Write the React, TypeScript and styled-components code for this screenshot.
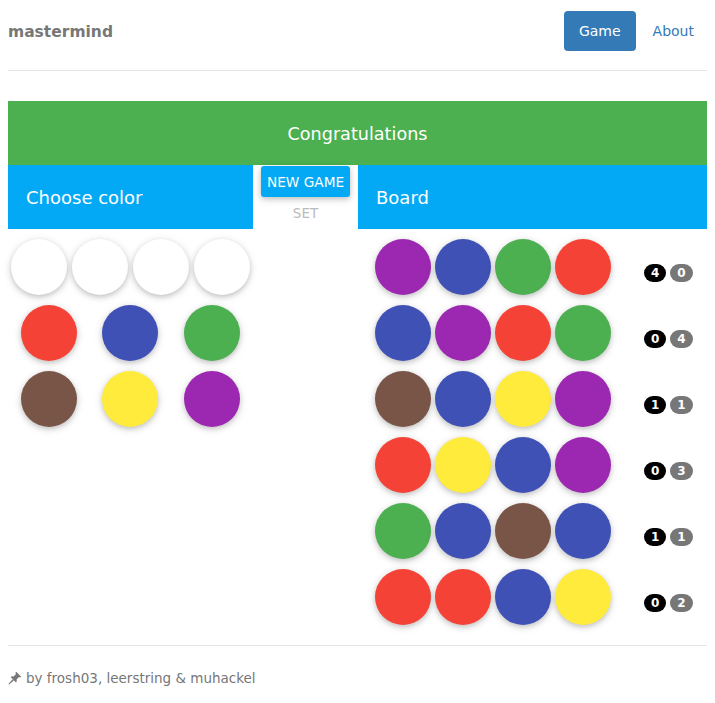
import React from 'react';
import styled, { createGlobalStyle } from 'styled-components';

type Peg = 'red' | 'blue' | 'green' | 'brown' | 'yellow' | 'purple' | 'white';

const pegColors: Record<Peg, string> = {
    red: '#f44336',
    blue: '#3f51b5',
    green: '#4caf50',
    brown: '#795548',
    yellow: '#ffeb3b',
    purple: '#9c27b0',
    white: '#ffffff',
};

type Row = {
    pegs: Peg[];
    black: number;
    white: number;
};

const board: Row[] = [
    { pegs: ['purple', 'blue', 'green', 'red'], black: 4, white: 0 },
    { pegs: ['blue', 'purple', 'red', 'green'], black: 0, white: 4 },
    { pegs: ['brown', 'blue', 'yellow', 'purple'], black: 1, white: 1 },
    { pegs: ['red', 'yellow', 'blue', 'purple'], black: 0, white: 3 },
    { pegs: ['green', 'blue', 'brown', 'blue'], black: 1, white: 1 },
    { pegs: ['red', 'red', 'blue', 'yellow'], black: 0, white: 2 },
];

const palette: Peg[] = ['red', 'blue', 'green', 'brown', 'yellow', 'purple'];

const App = () => {
    return (
        <Page>
            <GlobalStyle />
            <NavBar>
                <Brand>mastermind</Brand>
                <NavPills>
                    <Pill active>Game</Pill>
                    <Pill>About</Pill>
                </NavPills>
            </NavBar>
            <Rule />

            <Banner>Congratulations</Banner>

            <Game>
                <Column>
                    <Header>Choose color</Header>
                    <SecretRow>
                        {[0, 1, 2, 3].map((i) => (
                            <Cell key={i}>
                                <Circle color={pegColors.white} />
                            </Cell>
                        ))}
                    </SecretRow>
                    <PaletteGrid>
                        {palette.map((p) => (
                            <Cell key={p}>
                                <Circle color={pegColors[p]} />
                            </Cell>
                        ))}
                    </PaletteGrid>
                </Column>

                <Actions>
                    <NewGame>NEW GAME</NewGame>
                    <SetLabel>SET</SetLabel>
                </Actions>

                <Column>
                    <Header>Board</Header>
                    <BoardRows>
                        {board.map((row, i) => (
                            <BoardRow key={i}>
                                <Pegs>
                                    {row.pegs.map((p, j) => (
                                        <Circle key={j} color={pegColors[p]} />
                                    ))}
                                </Pegs>
                                <Score>
                                    <Badge dark>{row.black}</Badge>
                                    <Badge>{row.white}</Badge>
                                </Score>
                            </BoardRow>
                        ))}
                    </BoardRows>
                </Column>
            </Game>

            <Rule />
            <Footer>
                <svg width="14" height="14" viewBox="0 0 14 14">
                    <g fill="#777">
                        <path d="M8.2 0.8 L13.2 5.8 L12.2 6.6 L11 6 L8.6 8.4 L8.8 10.4 L7.8 11.2 L2.8 6.2 L3.6 5.2 L5.6 5.4 L8 3 L7.4 1.8 Z" />
                        <path d="M4.6 8.2 L5.8 9.4 L1 13.6 L0.4 13 Z" />
                    </g>
                </svg>
                <span>by frosh03, leerstring &amp; muhackel</span>
            </Footer>
        </Page>
    );
};

const GlobalStyle = createGlobalStyle`
    body {
        margin: 0;
        background: #fff;
        font-family: "DejaVu Sans", "Noto Sans", sans-serif;
    }
`;

const Page = styled.div`
    padding: 0 8px;
`;

const NavBar = styled.nav`
    display: flex;
    align-items: center;
    justify-content: space-between;
    height: 62px;
`;

const Brand = styled.div`
    font-size: 15.5px;
    font-weight: bold;
    color: #777;
    padding-top: 1px;
`;

const NavPills = styled.div`
    display: flex;
    gap: 2px;
    margin-right: -2px;
`;

const Pill = styled.a<{ active?: boolean }>`
    display: block;
    padding: 0 15px;
    height: 40px;
    line-height: 40px;
    font-size: 14px;
    border-radius: 4px;
    color: ${(p) => (p.active ? '#fff' : '#337ab7')};
    background: ${(p) => (p.active ? '#337ab7' : 'transparent')};
`;

const Rule = styled.hr`
    margin: 8px 0 0;
    border: 0;
    border-top: 1px solid #e5e5e5;
`;

const Banner = styled.div`
    margin-top: 30px;
    height: 64px;
    background: #4caf50;
    color: #fff;
    font-size: 17.6px;
    display: flex;
    align-items: center;
    justify-content: center;
    padding-top: 1px;
    box-sizing: border-box;
`;

const Game = styled.div`
    display: grid;
    grid-template-columns: 245px 105px 1fr;
    min-height: 472px;
`;

const Column = styled.div`
    display: flex;
    flex-direction: column;
`;

const Header = styled.div`
    height: 64px;
    background: #03a9f4;
    color: #fff;
    font-size: 18px;
    display: flex;
    align-items: center;
    padding-left: 18px;
`;

const SecretRow = styled.div`
    display: grid;
    grid-template-columns: repeat(4, 1fr);
    margin-top: 10px;
`;

const PaletteGrid = styled.div`
    display: grid;
    grid-template-columns: repeat(3, 1fr);
    row-gap: 10px;
    margin-top: 10px;
`;

const Cell = styled.div`
    display: flex;
    justify-content: center;
`;

const Circle = styled.div<{ color: string }>`
    width: 56px;
    height: 56px;
    border-radius: 50%;
    background: ${(p) => p.color};
    box-shadow: 0 2px 5px 0 rgba(0, 0, 0, 0.16), 0 2px 10px 0 rgba(0, 0, 0, 0.12);
`;

const Actions = styled.div`
    display: flex;
    flex-direction: column;
    align-items: center;
    padding-top: 1px;
`;

const NewGame = styled.button`
    width: 89px;
    height: 31px;
    border: 0;
    border-radius: 3px;
    background: #03a9f4;
    color: #fff;
    font-family: "DejaVu Sans", sans-serif;
    font-size: 13.7px;
    padding: 0;
    box-shadow: 0 2px 5px 0 rgba(0, 0, 0, 0.16), 0 2px 10px 0 rgba(0, 0, 0, 0.12);
`;

const SetLabel = styled.div`
    margin-top: 8px;
    font-size: 13.5px;
    color: #bbb;
`;

const BoardRows = styled.div`
    display: flex;
    flex-direction: column;
    gap: 10px;
    margin-top: 10px;
    padding-left: 17px;
`;

const BoardRow = styled.div`
    display: flex;
    align-items: center;
`;

const Pegs = styled.div`
    display: flex;
    gap: 4px;
`;

const Score = styled.div`
    display: flex;
    gap: 4px;
    margin-left: 33px;
    padding-top: 12px;
`;

const Badge = styled.span<{ dark?: boolean }>`
    display: inline-block;
    min-width: 8px;
    padding: 3px 7px;
    border-radius: 10px;
    font-size: 12px;
    font-weight: bold;
    line-height: 12px;
    color: #fff;
    text-align: center;
    background: ${(p) => (p.dark ? '#000' : '#777')};
`;

const Footer = styled.footer`
    display: flex;
    align-items: center;
    gap: 4px;
    height: 64px;
    color: #777;
    font-size: 13.5px;
`;

export default App;
